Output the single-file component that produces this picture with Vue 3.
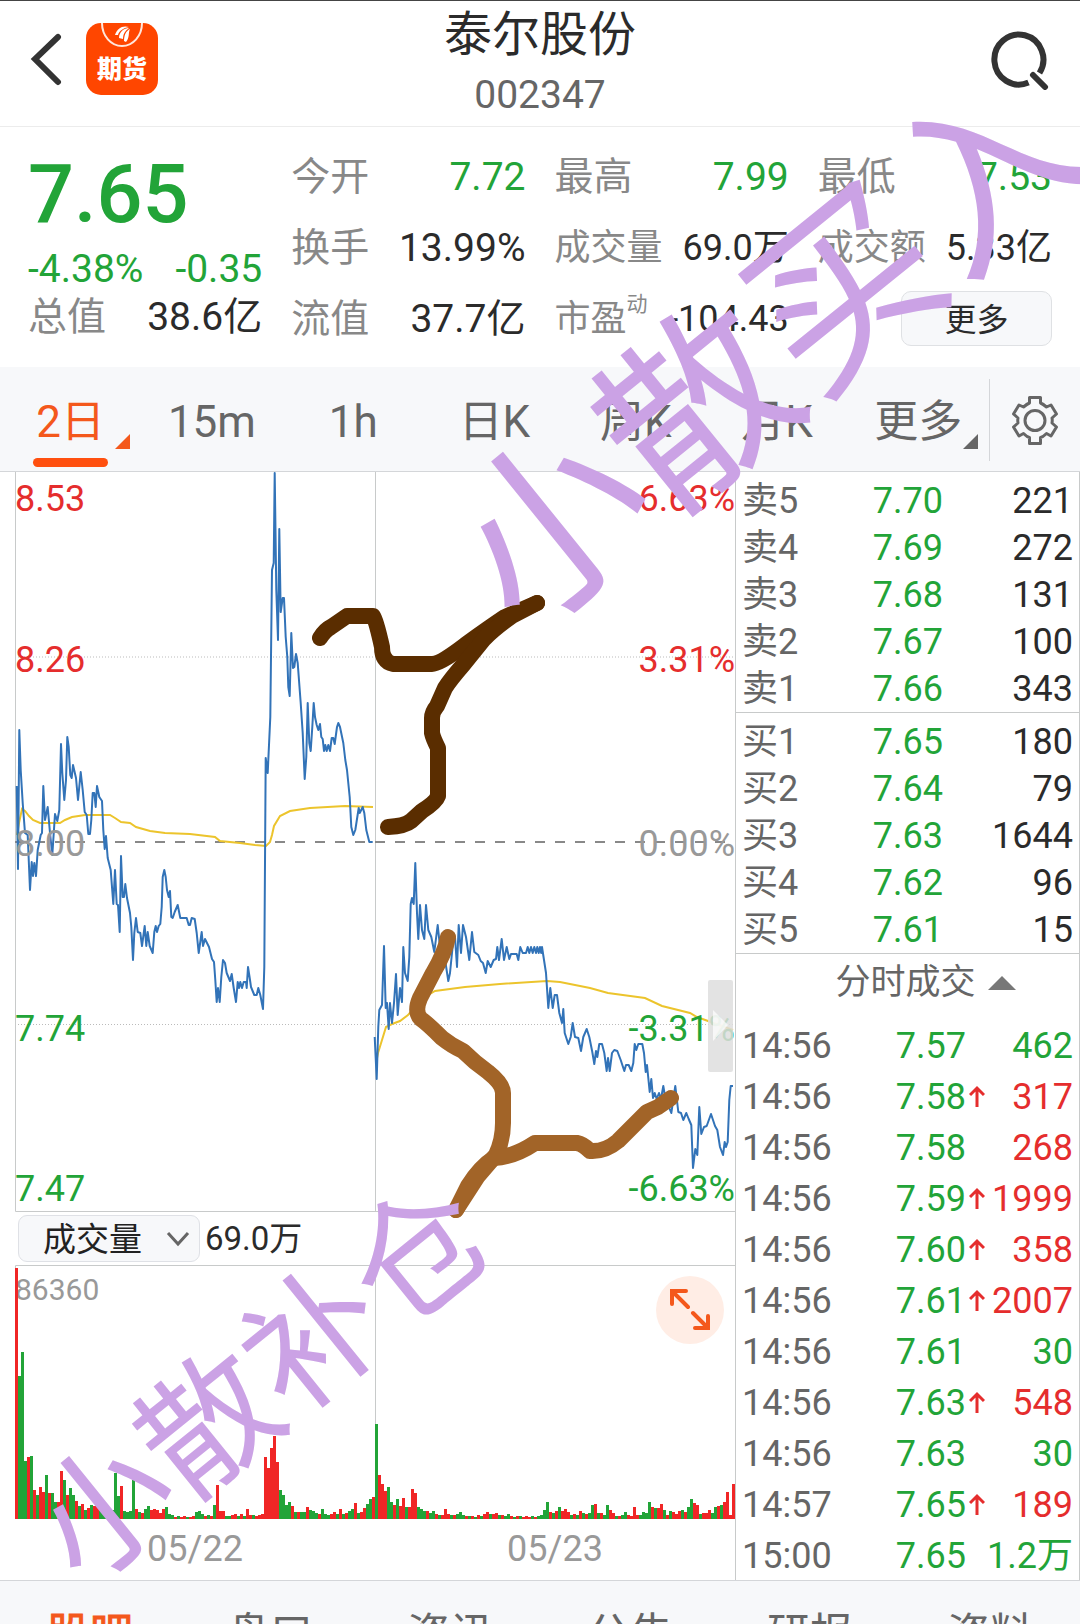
<script setup>
import { ref } from 'vue'

const periods = [
	{ name: '2日', more: true },
	{ name: '15m' },
	{ name: '1h' },
	{ name: '日K' },
	{ name: '周K' },
	{ name: '月K' },
	{ name: '更多', more: true },
]
const activePeriod = ref('2日')

const sections = ['股吧', '盘口', '资讯', '公告', '研报', '资料']
const activeSection = ref('股吧')

const indicator = ref('成交量')

const stats = [
	{ label: '今开', value: '7.72', down: true },
	{ label: '最高', value: '7.99', down: true },
	{ label: '最低', value: '7.53', down: true },
	{ label: '换手', value: '13.99%' },
	{ label: '成交量', value: '69.0万', small: true },
	{ label: '成交额', value: '5.33亿', small: true },
	{ label: '流值', value: '37.7亿' },
	{ label: '市盈', sup: '动', value: '-104.43', small: true },
]

const sells = [
	['卖5', '7.70', 221],
	['卖4', '7.69', 272],
	['卖3', '7.68', 131],
	['卖2', '7.67', 100],
	['卖1', '7.66', 343],
]
const buys = [
	['买1', '7.65', 180],
	['买2', '7.64', 79],
	['买3', '7.63', 1644],
	['买4', '7.62', 96],
	['买5', '7.61', 15],
]

const trades = [
	{ time: '14:56', price: '7.57', up: false, volume: '462', side: 'down' },
	{ time: '14:56', price: '7.58', up: true, volume: '317', side: 'up' },
	{ time: '14:56', price: '7.58', up: false, volume: '268', side: 'up' },
	{ time: '14:56', price: '7.59', up: true, volume: '1999', side: 'up' },
	{ time: '14:56', price: '7.60', up: true, volume: '358', side: 'up' },
	{ time: '14:56', price: '7.61', up: true, volume: '2007', side: 'up' },
	{ time: '14:56', price: '7.61', up: false, volume: '30', side: 'down' },
	{ time: '14:56', price: '7.63', up: true, volume: '548', side: 'up' },
	{ time: '14:56', price: '7.63', up: false, volume: '30', side: 'down' },
	{ time: '14:57', price: '7.65', up: true, volume: '189', side: 'up' },
	{ time: '15:00', price: '7.65', up: false, volume: '1.2万', side: 'down' },
]

const axis = [
	{ y: 511, price: '8.53', rate: '6.63%', tone: 'up' },
	{ y: 672, price: '8.26', rate: '3.31%', tone: 'up' },
	{ y: 856, price: '8.00', rate: '0.00%', tone: 'flat' },
	{ y: 1041, price: '7.74', rate: '-3.31%', tone: 'down' },
	{ y: 1201, price: '7.47', rate: '-6.63%', tone: 'down' },
]

const priceDay1 = '16.7,786 18,869 19.3,730 20.7,770 22.7,803 25,833 27.7,835 30,890 31.7,862 33,876 34.3,863 36,876 37.7,850 40.7,835 42,833 43.3,786 45,820 47.7,807 50,833 52.3,855 55,814 57.3,821 59.3,810 61,744 62.3,773 64.3,800 66,780 67.3,737 68.7,747 70.3,775 71.7,778 73,765 76,778 78,800 80.7,772 82.7,790 84.7,812 86.7,815 88.3,834 90,834 91.3,820 92.7,793 94.3,793 95.7,807 97,786 99.3,797 102,801 103.3,830 104.7,849 106,836 107.7,858 110.7,870 113.3,904 115,870 116.7,904 118,905 119.7,932 121,856 122.7,897 124,897 125.3,884 127,898 130,913 131.3,927 133,960 134.3,933 136,918 137.7,932 140.3,933 142,946 144.7,926 146.3,946 147.7,932 149.7,946 152.7,953 154.3,932 155.7,926 157,932 158.7,926 160.3,924 161.7,907 162.7,877 164.3,870 165.7,877 167,890 168.7,897 170,891 171.3,917 172.7,918 174.7,912 177.7,905 180.3,918 186.7,918 188.7,925 190,925 191.7,918 194.7,919 196.7,933 198.7,953 201.7,932 203,946 205,939 209,947 212,959 214,962 215.3,980 216.7,1002 218,988 219.7,1002 221.3,977 223,960 225,963 226.7,973 230,981 231.7,974 233.7,988 236,1002 237.7,982 239,988 240.3,982 242,988 243.7,982 246,982 246.7,988 248,967 249.7,978 251,987 254.3,995 256.7,995 258.3,988 260.3,995 263,1009 264.3,967 265.7,758 267.7,773 270.3,717 272,570 273.7,563 274.7,473 276.3,590 278,640 279.3,529 280.7,612 282.7,598 284,598 285.7,637 287.3,657 288.3,687 289.7,696 291.3,633 293,668 294.3,667 296,654 297.7,663 300.7,703 302.7,733 304.7,779 306.3,757 307.7,703 309.3,743 310.7,751 312.3,727 313.7,703 315,717 316.7,725 318.3,730 320,724 321.3,737 322.7,739 324,751 325.3,745 326.7,751 328.3,745 330,751 331.7,738 333.3,738 334.7,744 337,727 338.3,723 340,727 343.3,743 345.3,760 347,770 349.7,797 351.3,827 353.3,835 355.3,830 358.7,808 359.7,813 362.7,807 364.3,813 366.3,830 369.3,842 372.7,842'
const priceDay2 = '374.7,1037 376.7,1079 378.3,1027 379.3,1010 382,1005 384,946 385.7,1008 387,1003 388.7,1029 390,1003 392,1023 394,1003 396,974 397.7,1015 400,988 402,1002 403.3,947 405,973 407.7,981 409.3,957 410.7,904 412,898 413.7,904 415.3,863 417,913 418.3,939 420,905 422,930 424.3,939 426,905 428.3,930 431.3,937 434.3,952 437.7,925 440,947 444,953 448.3,981 450,973 453.3,940 455,937 457,967 458.7,925 461,953 463,925 466,937 469.3,960 472,932 474.3,952 478.3,955 480.7,961 483,963 485.7,973 487.7,961 490.7,967 493.7,960 496,959 497.3,947 499,960 501.7,939 504,960 506.7,947 509.3,959 511,954 516.7,954 518.3,960 520.3,947 522.7,953 526,953 527.7,947 529.3,953 531,947 532.7,953 534.3,947 536,953 537.3,947 538.7,953 540,947 541.2,953 542,947 544,960 546,973 548.3,1008 550.3,988 552.7,1008 554.7,995 557,995 559.3,1013 562,1023 563.3,1009 564.7,1033 568.3,1044 570.7,1037 572.7,1023 575,1037 578.3,1038 581,1051 583.3,1037 586.7,1029 589.3,1037 592.3,1052 594.3,1064 596,1051 597.3,1057 599.3,1044 602,1044 604.3,1053 606.7,1071 608,1058 609.7,1071 612,1053 614.3,1050 617.3,1051 620.7,1060 624.3,1071 626,1065 628.7,1065 631.3,1071 633.3,1063 634.7,1044 636.3,1050 638.3,1044 642.3,1044 644,1053 645.7,1072 647,1065 649.7,1092 651.3,1079 653,1098 654.7,1093 656.7,1099 659,1093 661,1099 663.3,1086 665.3,1098 671.3,1113 675.3,1086 678.3,1112 681,1113 683.3,1120 686.3,1113 688.7,1119 691.3,1125 693,1168 695.3,1149 697.3,1155 699.3,1107 701.3,1134 704,1127 706.7,1126 711,1114 715,1126 717.3,1130 720,1147 723,1155 724.7,1142 726,1147 727.7,1142 729.3,1100 730.7,1086 733,1086'
const avgDay1 = '17,835 19,823 22,809 25,811 29,816 33,820 40,823 60,823 65,820 72,817 85,815 110,815 115,818 121,822 130,823 136,827 150,831 165,833 190,834 215,837 220,841 240,843 255,845 266,846 270,842 272,835 274,826 280,816 290,811 310,808 345,806 373,807'
const avgDay2 = '376,1063 378,1053 382,1040 386,1027 392,1024 400,1021 408,1015 420,1000 435,991 465,987 500,984 547,981 560,982 590,988 608,993 645,998 662,1006 690,1013 697,1017 708,1021 733,1030'

// bar heights, positive is a rising minute, negative a falling one
const volumeDay1 = [251, -143, -167, -58, 62, -63, 29, -24, 32, 27, -44, 26, -26, -17, 17, 48, -39, 24, -31, -24, 18, -13, 15, -9, 11, -14, 13, 13, -10, -9, -10, -10, -9, -46, -23, 33, -8, -7, -8, -39, 10, -7, 6, -10, -13, 9, 10, 9, 6, 10, -12, -5, -4, 2, -3, 2, 3, -2, 2, 3, -7, -8, -5, 3, -4, 3, -14, 34, 8, 8, -3, -3, 4, 5, -3, 5, -3, 10, 4, -4, 3, 4, 5, 62, 51, 71, 83, 57, -29, -24, -14, -17, 13, -7, 7, -7, -7, 12, -9, -8, -6, 5, -10, -5, -4, 5, 7, -5, 10, -5, 6, -8, -10, 16, -6, 7, 11, -15, -20, 22]
const volumeDay2 = [-95, 44, 35, 28, -32, -17, 14, -20, 13, 21, -12, 12, 30, 26, -12, -10, -8, 8, -6, -8, 5, -4, 4, 10, 5, -4, 4, -5, -7, -4, 3, -3, 3, -2, 4, -3, 5, 7, -5, 5, 6, -4, 4, -3, -5, 3, -2, 3, -3, 2, 3, 2, -3, 2, -3, -4, -9, -17, 7, -6, 8, -12, 8, 10, 7, -4, 5, -4, 8, -6, 5, -6, -14, 15, -6, 6, -4, -14, 9, 6, -3, 3, -4, -7, 4, 3, 12, 4, -4, -7, -6, -17, 12, -11, 11, 15, -9, 4, -8, 7, 5, 8, -9, 7, -12, -20, 16, 14, -5, 6, 6, 9, -6, -12, 13, -14, 17, 27, 4, 35]
const bars = [...volumeDay1, ...volumeDay2].map((v, i) => ({
	x: 15 + i * 3,
	h: Math.abs(v),
	tone: v > 0 ? 'up' : 'down',
}))
</script>

<template>
	<div class="page">
		<header class="top-bar">
			<div class="top-left">
				<button class="icon-button" aria-label="返回">
					<svg width="32" height="56" viewBox="0 0 32 56"><path d="M28 6 5 28 28 51" fill="none" stroke="#333" stroke-width="6" stroke-linecap="round" /></svg>
				</button>
				<a class="logo" href="#">
					<svg width="72" height="30" viewBox="0 0 72 30">
						<path d="M16 0C16 13 25 23 36 23S56 13 56 0" fill="none" stroke="#ffe6dc" stroke-width="2" />
						<path d="M29 12C31 5 37 2 43 4C37 5 33 8 32 12ZM33 15C33 9 38 5 43 5C39 8 37 11 37 16ZM38 18C38 12 40 8 44 6C42 10 44 14 40 19Z" fill="#fff" />
					</svg>
					<span>期货</span>
				</a>
			</div>
			<div class="heading">
				<h1>泰尔股份</h1>
				<p>002347</p>
			</div>
			<button class="icon-button" aria-label="搜索">
				<svg width="60" height="60" viewBox="0 0 60 60" fill="none" stroke="#333">
					<path d="M38.500 52.500A24.500 25 0 1 1 49.500 43" stroke-width="6" />
					<path d="M43 45 55 57" stroke-width="6" stroke-linecap="round" />
				</svg>
			</button>
		</header>

		<section class="quote">
			<div class="quote-main">
				<strong class="down">7.65</strong>
				<p class="change down"><span>-4.38%</span><span>-0.35</span></p>
				<p class="stat"><span class="label">总值</span><span>38.6亿</span></p>
			</div>
			<div class="stats">
				<p class="stat" :class="{ small: s.small }" v-for="s in stats" :key="s.label">
					<span class="label">{{ s.label }}<sup v-if="s.sup">{{ s.sup }}</sup></span>
					<span :class="{ down: s.down }">{{ s.value }}</span>
				</p>
				<button class="more-button">更多</button>
			</div>
		</section>

		<nav class="periods">
			<button
				v-for="p in periods"
				:key="p.name"
				:class="{ active: activePeriod === p.name }"
				@click="activePeriod = p.name"
			>
				<span>{{ p.name }}</span>
				<svg v-if="p.more" class="corner" width="15" height="15" viewBox="0 0 15 15"><path d="M15 0V15H0Z" fill="currentColor" /></svg>
			</button>
			<button class="settings" aria-label="设置">
				<svg width="48" height="52" viewBox="0 0 48 52" fill="none" stroke="#666" stroke-width="3" stroke-linejoin="round">
					<path d="M18.500 3.500H29.500V9Q32 10 35.500 13L40 11L45.500 20L41 24Q41.500 26 41 29L45.500 33L40 42L35.500 39.500Q32 43 29.500 43.500V49.500H18.500V43.500Q16 43 12.500 39.500L8 42L2.500 33L7 29Q6.500 26 7 24L2.500 20L8 11L12.500 13Q16 10 18.500 9Z" />
					<circle cx="24" cy="26.500" r="10" />
				</svg>
			</button>
		</nav>

		<main class="market">
			<div class="charts">
				<svg class="chart" viewBox="15 472 720 740">
					<path d="M15.500 472V1211.500H735M375.500 472V1211" class="frame" />
					<path d="M18 657H735M18 1024.500H735" class="grid-line" />
					<path d="M15 842H735" class="base-line" />
					<polyline class="average" :points="avgDay1" />
					<polyline class="average" :points="avgDay2" />
					<polyline class="price" :points="priceDay1" />
					<polyline class="price" :points="priceDay2" />
					<g class="axis">
						<template v-for="a in axis" :key="a.price">
							<text x="15" :y="a.y" :class="a.tone">{{ a.price }}</text>
							<text x="735" :y="a.y" text-anchor="end" :class="a.tone">{{ a.rate }}</text>
						</template>
					</g>
					<rect x="708" y="980" width="25" height="92" rx="2" fill="#dedede" fill-opacity=".85" />
					<path d="M713 1010V1041L728 1025Z" fill="#fff" fill-opacity=".7" />
				</svg>
				<div class="indicator-bar">
					<div class="indicator-select">
						<select v-model="indicator" aria-label="指标">
							<option>成交量</option>
							<option>成交额</option>
						</select>
						<svg width="24" height="16" viewBox="0 0 24 16"><path d="M2 2 12 13 22 2" fill="none" stroke="#666" stroke-width="3" /></svg>
					</div>
					<span>69.0万</span>
				</div>
				<div class="volume">
					<svg class="chart" viewBox="15 1265 720 254">
						<path d="M15.500 1519V1265.500H735M375.500 1265V1519" class="frame" />
						<text x="15" y="1300" class="peak">86360</text>
						<rect v-for="b in bars" :key="b.x" :x="b.x" :y="1519 - b.h" width="3" :height="b.h" :class="b.tone" />
					</svg>
					<button class="expand" aria-label="全屏">
						<svg width="40" height="42" viewBox="0 0 40 42" fill="none" stroke="#f4581c" stroke-width="4" stroke-linecap="round">
							<path d="M18 18 3 3M2 15V2L16 2M23 24 38 39M38 27V39H25" />
						</svg>
					</button>
				</div>
				<div class="dates"><span>05/22</span><span>05/23</span></div>
			</div>

			<aside class="side">
				<table class="book" v-for="(rows, i) in [sells, buys]" :key="i">
					<tbody>
						<tr v-for="r in rows" :key="r[0]">
							<th>{{ r[0] }}</th>
							<td class="down">{{ r[1] }}</td>
							<td>{{ r[2] }}</td>
						</tr>
					</tbody>
				</table>
				<button class="ticks-title">
					<span>分时成交</span>
					<svg width="28" height="14" viewBox="0 0 28 14"><path d="M14 0 28 14H0Z" fill="#777" /></svg>
				</button>
				<table class="ticks">
					<tbody>
						<tr v-for="(t, i) in trades" :key="i">
							<th>{{ t.time }}</th>
							<td class="down">{{ t.price }}</td>
							<td class="arrow">
								<svg v-if="t.up" width="16" height="22" viewBox="0 0 16 22"><path d="M8 22V3M1 10 8 3 15 10" fill="none" stroke="#e52d2d" stroke-width="3" /></svg>
							</td>
							<td :class="t.side">{{ t.volume }}</td>
						</tr>
					</tbody>
				</table>
			</aside>
		</main>

		<nav class="sections">
			<button
				v-for="s in sections"
				:key="s"
				:class="{ active: activeSection === s }"
				@click="activeSection = s"
			>{{ s }}</button>
		</nav>

		<!-- hand-drawn notes over the whole page -->
		<svg class="notes" viewBox="0 0 1080 1624">
			<g fill="none" stroke-width="16" stroke-linecap="round" stroke-linejoin="round">
				<path stroke="#5a2d00" d="M320 638Q325 630 331 627L347 616H373Q376 620 382 647Q382 662 393 664H432Q440 664 465 645Q490 627 505 617L537 603" />
				<path stroke="#5a2d00" d="M537 603L512 616Q495 628 484 639L463 665Q450 680 445 688L437 706Q432 712 432 718V733Q433 738 438 748V796Q436 802 422 811L411 821Q405 826 388 827" />
				<path stroke="#a26428" d="M448 937Q445 953 433 973L420 998Q414 1012 421 1019Q428 1024 442 1038Q452 1046 463 1051Q475 1063 488 1072Q503 1084 503 1093V1123Q503 1140 496 1155L478 1176L456 1210" />
				<path stroke="#a26428" d="M456 1210L468 1186Q480 1167 494 1158Q514 1157 535 1143H577Q583 1144 590 1151Q605 1152 618 1141Q638 1121 647 1112L658 1107L671 1098" />
			</g>
			<text font-size="188" transform="translate(521 637) rotate(-39)">小散买入</text>
			<text font-size="135" transform="translate(82 1589) rotate(-39)">小散补仓</text>
		</svg>
	</div>
</template>

<style>
body {
	background: #fff;
}
</style>

<style scoped>
.page {
	position: relative;
	height: 100vh;
	overflow: hidden;
	box-sizing: border-box;
	border-top: 1px solid #444;
	background: #fff;
	color: #2b2b2b;
	font-family: Roboto, "Noto Sans CJK SC", sans-serif;
}
h1, p {
	margin: 0;
	font-weight: 400;
}
button {
	border: none;
	background: none;
	padding: 0;
	font: inherit;
	color: inherit;
}
.up {
	color: #e52d2d;
	fill: #e52d2d;
}
.down {
	color: #22a438;
	fill: #22a438;
}
.flat {
	fill: #999;
}

.top-bar {
	display: flex;
	justify-content: space-between;
	height: 125px;
	padding: 0 30px;
	border-bottom: 1px solid #ececec;
}
.top-left {
	display: flex;
	align-items: center;
	gap: 24px;
	flex: 1;
	height: 116px;
}
.top-bar > .icon-button {
	flex: 1;
	height: 118px;
	text-align: right;
}
.icon-button svg {
	vertical-align: middle;
}
.logo {
	display: flex;
	flex-direction: column;
	align-items: center;
	width: 72px;
	height: 72px;
	border-radius: 15px;
	background: #ff4600;
	color: #fff;
	font-size: 25px;
	font-weight: 900;
	line-height: 34px;
	text-decoration: none;
	overflow: hidden;
}
.heading {
	padding-top: 2px;
	text-align: center;
}
.heading h1 {
	font-size: 48px;
	line-height: 64px;
}
.heading p {
	font-size: 39px;
	line-height: 56px;
	color: #666;
}

.quote {
	display: flex;
	gap: 29px;
	padding: 14px 28px 12px;
	height: 214px;
	font-size: 39px;
}
.quote-main {
	flex: 234;
}
.quote-main strong {
	display: block;
	font-size: 81px;
	line-height: 108px;
	font-weight: 500;
}
.change {
	display: flex;
	justify-content: space-between;
	line-height: 40px;
	margin-bottom: 2px;
}
.stats {
	flex: 760;
	display: grid;
	grid-template-columns: repeat(3, 1fr);
	grid-auto-rows: 71px;
	column-gap: 29px;
}
.stat {
	display: flex;
	justify-content: space-between;
	align-items: center;
	line-height: 52px;
	white-space: nowrap;
}
.label {
	color: #888;
}
.small {
	font-size: 36px;
}
sup {
	font-size: 21px;
	line-height: 1;
	vertical-align: 20px;
}
.more-button {
	justify-self: end;
	align-self: center;
	width: 151px;
	height: 55px;
	padding-bottom: 4px;
	border: 1px solid #dfe1e4;
	border-radius: 10px;
	background: #f7f8fa;
	font-size: 32px;
}

.periods {
	display: flex;
	height: 104px;
	border-bottom: 1px solid #d4d6d9;
	background: #f7f8fa;
	color: #666;
	font-size: 44px;
	line-height: 60px;
}
.periods button {
	position: relative;
	flex: 141;
	padding-top: 6px;
}
.periods button.active {
	color: #f4581c;
}
.periods .active::after {
	content: "";
	position: absolute;
	left: 33px;
	right: 33px;
	bottom: 4px;
	height: 9px;
	border-radius: 5px;
	background: #ff500f;
}
.corner {
	position: absolute;
	right: 11px;
	bottom: 22px;
}
.periods .settings {
	flex: 90;
	border-left: 1px solid #d4d6d9;
	height: 82px;
	margin-top: 12px;
	padding: 0;
}
.settings svg {
	display: block;
	margin: auto;
}

.market {
	display: flex;
}
.charts {
	flex: 1;
	padding-left: 15px;
}
.chart {
	display: block;
	width: 100%;
	height: auto;
}
.frame {
	fill: none;
	stroke: #c8caca;
}
.grid-line {
	stroke: #bbb;
	stroke-dasharray: 1 2;
}
.base-line {
	stroke: #888;
	stroke-width: 2;
	stroke-dasharray: 10 10;
}
.axis {
	font-size: 36px;
}
.average {
	fill: none;
	stroke: #ecc42c;
	stroke-width: 2;
}
.price {
	fill: none;
	stroke: #3273b8;
	stroke-width: 2;
	stroke-linejoin: round;
}
.indicator-bar {
	display: flex;
	align-items: center;
	gap: 5px;
	height: 53px;
	padding-left: 3px;
	font-size: 33px;
	line-height: 47px;
}
.indicator-select {
	position: relative;
	width: 182px;
}
.indicator-select select {
	appearance: none;
	display: block;
	width: 100%;
	height: 47px;
	padding: 0 0 2px 24px;
	border: 1px solid #dfe1e6;
	border-radius: 9px;
	background: #f7f8fa;
	color: #222;
	font: inherit;
}
.indicator-select svg {
	position: absolute;
	right: 10px;
	top: 16px;
	pointer-events: none;
}
.volume {
	position: relative;
}
.volume .up {
	fill: #f02626;
}
.peak {
	font-size: 30px;
	fill: #999;
}
.expand {
	position: absolute;
	right: 11px;
	top: 11px;
	width: 68px;
	height: 68px;
	border-radius: 50%;
	background: #ffede5;
}
.expand svg {
	display: block;
	margin: auto;
}
.dates {
	display: flex;
	height: 61px;
	color: #999;
	font-size: 36px;
	line-height: 60px;
	text-align: center;
}
.dates span {
	flex: 1;
}

.side {
	width: 345px;
	box-sizing: border-box;
	border-left: 1px solid #c8caca;
	border-right: 1px solid #c8caca;
	font-size: 36px;
}
table {
	width: 100%;
	border-spacing: 0;
	table-layout: fixed;
}
th, td {
	padding: 2px 0 0;
	font-weight: 400;
	text-align: right;
	white-space: nowrap;
}
th {
	width: 100px;
	padding-left: 6px;
	text-align: left;
	color: #666;
}
td:last-child {
	padding-right: 6px;
}
.book {
	border-bottom: 1px solid #c8caca;
	padding-top: 5px;
}
.book tr {
	height: 47px;
	line-height: 45px;
}
.book td:nth-child(2) {
	width: 101px;
}
.ticks-title {
	display: flex;
	justify-content: center;
	align-items: center;
	gap: 12px;
	width: 100%;
	height: 65px;
	padding: 0 0 8px 36px;
	color: #666;
	font-size: 35px;
	line-height: 48px;
}
.ticks tr {
	height: 51px;
	line-height: 47px;
}
.ticks th, .ticks td {
	padding-top: 4px;
}
.ticks td:nth-child(2) {
	width: 124px;
}
.ticks .arrow {
	width: 19px;
	padding-top: 0;
}
.ticks svg {
	display: block;
	margin-left: auto;
}

.sections {
	display: flex;
	border-top: 1px solid #d4d6d9;
	background: #f7f8fa;
	color: #666;
	font-size: 43px;
	line-height: 62px;
	padding: 22px 0;
}
.sections button {
	flex: 1;
}
.sections .active {
	color: #f4581c;
	-webkit-text-stroke: 1px #f4581c;
}

.notes {
	position: absolute;
	left: 0;
	top: -1px;
	width: 100%;
	height: auto;
	fill: #cba2e5;
	pointer-events: none;
}
</style>
